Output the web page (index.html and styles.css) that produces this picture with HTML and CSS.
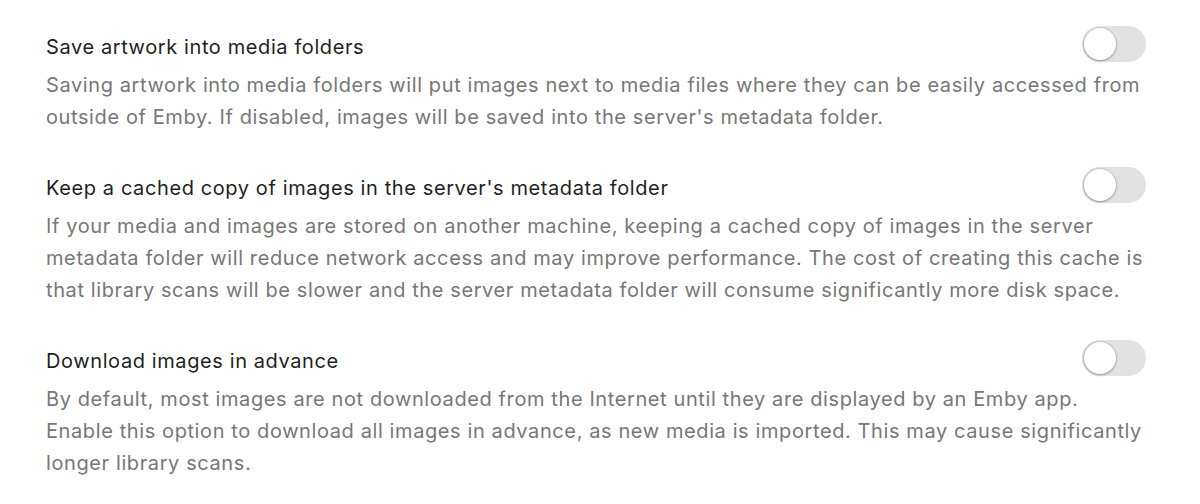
FILE: index.html
```html
<!DOCTYPE html>
<html lang="en">
<head>
  <meta charset="UTF-8">
  <title>Image settings</title>
  <link rel="stylesheet" href="styles.css">
</head>
<body>
  <div class="settings">
    <div class="setting">
      <div class="setting-head">
        <div class="setting-title">Save artwork into media folders</div>
        <label class="toggle"><input type="checkbox"><span class="track"></span></label>
      </div>
      <div class="setting-desc">Saving artwork into media folders will put images next to media files where they can be easily accessed from outside of Emby. If disabled, images will be saved into the server's metadata folder.</div>
    </div>

    <div class="setting">
      <div class="setting-head">
        <div class="setting-title">Keep a cached copy of images in the server's metadata folder</div>
        <label class="toggle"><input type="checkbox"><span class="track"></span></label>
      </div>
      <div class="setting-desc">If your media and images are stored on another machine, keeping a cached copy of images in the server metadata folder will reduce network access and may improve performance. The cost of creating this cache is that library scans will be slower and the server metadata folder will consume significantly more disk space.</div>
    </div>

    <div class="setting">
      <div class="setting-head">
        <div class="setting-title">Download images in advance</div>
        <label class="toggle"><input type="checkbox"><span class="track"></span></label>
      </div>
      <div class="setting-desc">By default, most images are not downloaded from the Internet until they are displayed by an Emby app. Enable this option to download all images in advance, as new media is imported. This may cause significantly longer library scans.</div>
    </div>
  </div>
</body>
</html>
```

FILE: styles.css
```css
body {
  margin: 0;
  padding: 0;
  background-color: #fff;
  font-family: Inter, "Noto Sans", sans-serif;
}

.settings {
  display: flex;
  flex-direction: column;
  gap: 39px;
  padding: 31px 54px 0 46px;
}

.setting-head {
  display: flex;
  align-items: center;
  justify-content: space-between;
  height: 32px;
  margin-bottom: 6px;
}

.setting-title {
  font-size: 20px;
  line-height: 32px;
  letter-spacing: 0.6px;
  color: #1f1f1f;
}

.setting-desc {
  font-size: 20px;
  line-height: 32px;
  letter-spacing: 0.6px;
  color: #777;
}

.toggle {
  flex-shrink: 0;
  width: 64px;
  height: 36px;
  margin-top: -6px;
}

.toggle input {
  display: none;
}

.track {
  display: block;
  width: 64px;
  height: 36px;
  border-radius: 18px;
  background-color: #e2e2e2;
  position: relative;
}

.track::after {
  content: "";
  position: absolute;
  top: 2px;
  left: 2px;
  width: 32px;
  height: 32px;
  border-radius: 50%;
  background-color: #fff;
  box-shadow: 0 0 0 1px rgba(0, 0, 0, 0.08), 0 1px 3px rgba(0, 0, 0, 0.3);
}
```
